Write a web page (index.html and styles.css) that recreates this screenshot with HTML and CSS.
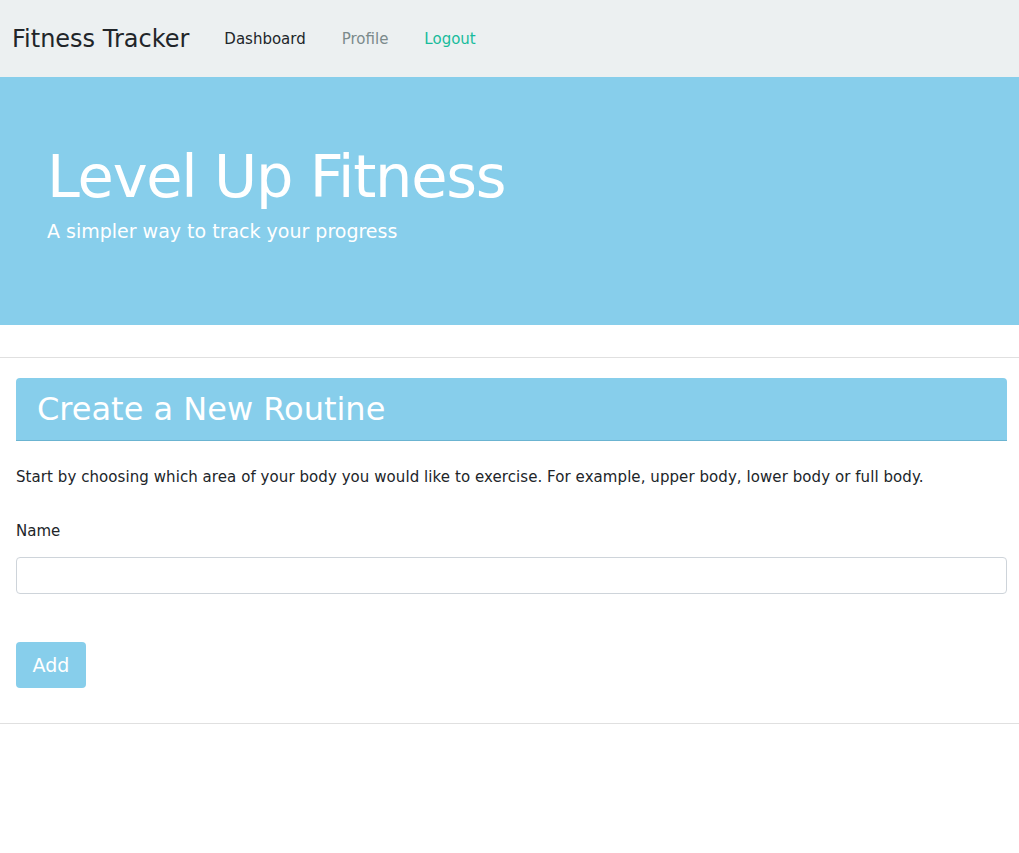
FILE: index.html
```html
<!DOCTYPE html>
<html>
<head>
<meta charset="utf-8">
<link rel="stylesheet" href="styles.css">
</head>
<body>
<nav class="navbar">
  <span class="brand">Fitness Tracker</span>
  <a class="nav-link active">Dashboard</a>
  <a class="nav-link muted">Profile</a>
  <a class="nav-link success">Logout</a>
</nav>
<header class="hero">
  <h1 class="hero-title">Level Up Fitness</h1>
  <p class="hero-sub">A simpler way to track your progress</p>
</header>
<main class="content">
  <hr class="rule">
  <section class="panel">
    <div class="panel-head"><h2 class="panel-title">Create a New Routine</h2></div>
    <p class="intro">Start by choosing which area of your body you would like to exercise. For example, upper body, lower body or full body.</p>
    <label class="label" for="name">Name</label>
    <input class="input" id="name" type="text">
    <button class="btn">Add</button>
  </section>
  <hr class="rule bottom">
</main>
</body>
</html>
```
FILE: styles.css
```css
* { box-sizing: border-box; }
body {
  margin: 0;
  font-family: "DejaVu Sans", Verdana, sans-serif;
  color: #212529;
  background: #fff;
}
.navbar {
  height: 77px;
  background: #ecf0f1;
  display: flex;
  align-items: center;
  padding: 0 12px;
}
.brand {
  font-size: 24px;
  color: #212529;
  margin-right: 17px;
}
.nav-link {
  font-size: 15px;
  padding: 0 18px;
}
.nav-link.active { color: #212529; }
.nav-link.muted { color: #7b8a8b; }
.nav-link.success { color: #18bc9c; }
.hero {
  background: #87ceeb;
  height: 248px;
  padding: 64px 47px 0;
  color: #fff;
}
.hero-title {
  margin: 0;
  font-size: 59px;
  letter-spacing: -1.25px;
  font-weight: 400;
  line-height: 72px;
}
.hero-sub {
  margin: 6px 0 0;
  font-size: 19px;
  line-height: 24px;
}
.content { padding: 32px 0 0; }
.rule {
  margin: 0;
  border: 0;
  border-top: 1px solid #e0e0e0;
}
.panel {
  padding: 20px 12px 35px 16px;
}
.panel-head {
  background: #87ceeb;
  border-radius: 4px 4px 0 0;
  border-bottom: 1px solid #6bb4d1;
  height: 63px;
  padding: 0 21px;
  display: flex;
  align-items: center;
}
.panel-title {
  margin: 0;
  font-size: 32px;
  font-weight: 400;
  color: #fff;
}
.intro {
  margin: 25px 0 0;
  font-size: 15px;
  letter-spacing: 0.07px;
  line-height: 22px;
}
.label {
  display: block;
  margin-top: 32px;
  font-size: 15px;
  line-height: 22px;
}
.input {
  display: block;
  width: 100%;
  height: 37px;
  margin-top: 15px;
  border: 1px solid #ced4da;
  border-radius: 4px;
  font: inherit;
}
.btn {
  display: block;
  margin-top: 48px;
  width: 70px;
  height: 46px;
  border: 0;
  border-radius: 4px;
  background: #87ceeb;
  color: #fff;
  font-family: inherit;
  font-size: 19px;
}
```
